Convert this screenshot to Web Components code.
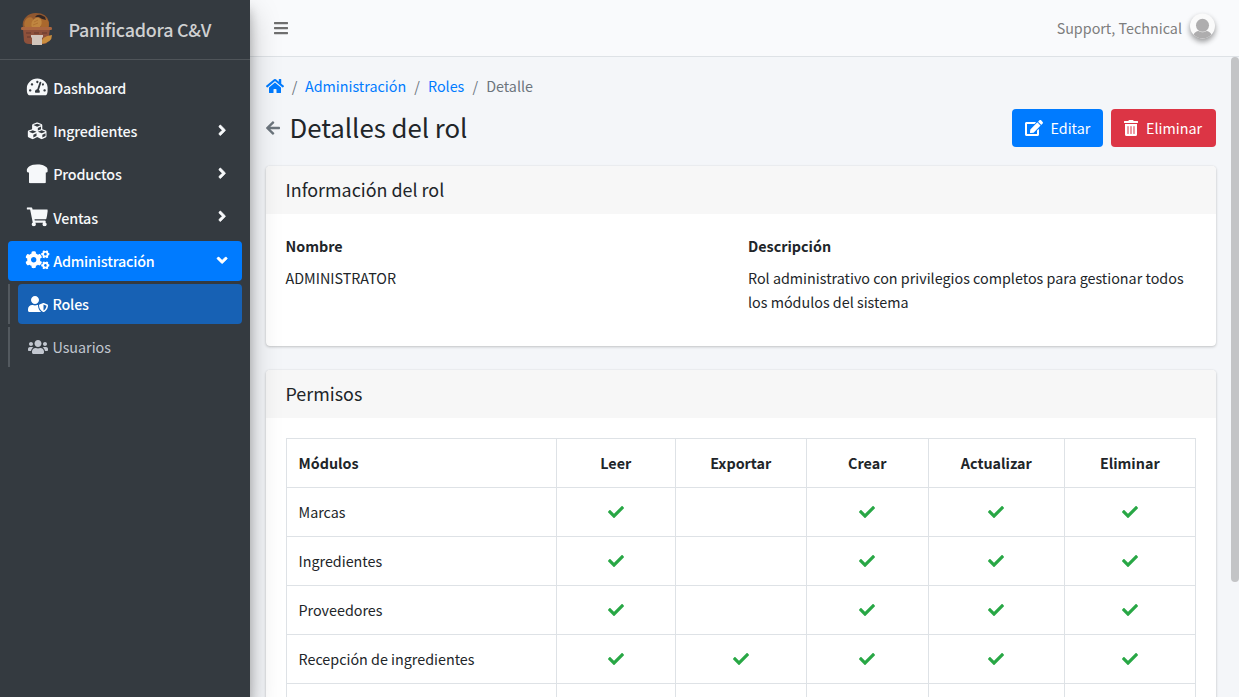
<!DOCTYPE html>
<html lang="es">
<head>
<meta charset="utf-8">
<title>Panificadora C&amp;V - Detalles del rol</title>
<style>
html,body{margin:0;height:100%;overflow:hidden}
body{font-family:"Noto Sans CJK SC","Noto Sans CJK JP",sans-serif;font-size:14.33px;line-height:24px;color:#212529;background:#f4f6f9}
</style>
</head>
<body>
<app-shell></app-shell>
<script>
const GEAR='M512.1 191l-8.2 14.3c-3 5.3-9.4 7.5-15.1 5.4-11.8-4.4-22.6-10.7-32.1-18.6-4.6-3.8-5.8-10.5-2.8-15.7l8.2-14.3c-6.9-8-12.3-17.3-15.9-27.4h-16.5c-6 0-11.2-4.3-12.2-10.3-2-12-2.1-24.6 0-37.1 1-6 6.2-10.4 12.2-10.4h16.5c3.6-10.1 9-19.4 15.9-27.4l-8.2-14.3c-3-5.2-1.9-11.9 2.8-15.7 9.5-7.9 20.4-14.2 32.1-18.6 5.7-2.1 12.1.1 15.1 5.4l8.2 14.3c10.5-1.9 21.2-1.9 31.7 0L552 6.3c3-5.3 9.4-7.5 15.1-5.4 11.8 4.4 22.6 10.7 32.1 18.6 4.6 3.8 5.8 10.5 2.8 15.7l-8.2 14.3c6.9 8 12.3 17.3 15.9 27.4h16.5c6 0 11.2 4.3 12.2 10.3 2 12 2.1 24.6 0 37.1-1 6-6.2 10.4-12.2 10.4h-16.5c-3.6 10.1-9 19.4-15.9 27.4l8.2 14.3c3 5.2 1.9 11.9-2.8 15.7-9.5 7.9-20.4 14.2-32.1 18.6-5.7 2.1-12.1-.1-15.1-5.4l-8.2-14.3c-10.4 1.9-21.2 1.9-31.7 0zm-10.5-58.8c38.5 29.6 82.4-14.3 52.8-52.8-38.5-29.7-82.4 14.3-52.8 52.8z';
const ICONS={
check:[512,'M173.898 439.404l-166.4-166.4c-9.997-9.997-9.997-26.206 0-36.204l36.203-36.204c9.997-9.998 26.207-9.998 36.204 0L192 312.69 432.095 72.596c9.997-9.997 26.207-9.997 36.204 0l36.203 36.204c9.997 9.997 9.997 26.206 0 36.204l-294.4 294.401c-9.998 9.997-26.207 9.997-36.204-.001z'],
bars:[448,'M16 132h416c8.837 0 16-7.163 16-16V76c0-8.837-7.163-16-16-16H16C7.163 60 0 67.163 0 76v40c0 8.837 7.163 16 16 16zm0 160h416c8.837 0 16-7.163 16-16v-40c0-8.837-7.163-16-16-16H16c-8.837 0-16 7.163-16 16v40c0 8.837 7.163 16 16 16zm0 160h416c8.837 0 16-7.163 16-16v-40c0-8.837-7.163-16-16-16H16c-8.837 0-16 7.163-16 16v40c0 8.837 7.163 16 16 16z'],
home:[576,'M280.37 148.26L96 300.11V464a16 16 0 0 0 16 16l112.06-.29a16 16 0 0 0 15.92-16V368a16 16 0 0 1 16-16h64a16 16 0 0 1 16 16v95.64a16 16 0 0 0 16 16.05L464 480a16 16 0 0 0 16-16V300L295.67 148.26a12.19 12.19 0 0 0-15.3 0zM571.6 251.47L488 182.56V44.05a12 12 0 0 0-12-12h-56a12 12 0 0 0-12 12v72.61L318.47 43a48 48 0 0 0-61 0L4.34 251.47a12 12 0 0 0-1.6 16.9l25.5 31A12 12 0 0 0 45.15 301l235.22-193.74a12.19 12.19 0 0 1 15.3 0L530.9 301a12 12 0 0 0 16.9-1.6l25.5-31a12 12 0 0 0-1.7-16.93z'],
cart:[576,'M528.12 301.319l47.273-208C578.806 78.301 567.391 64 551.99 64H159.208l-9.166-44.81C147.758 8.021 137.93 0 126.529 0H24C10.745 0 0 10.745 0 24v16c0 13.255 10.745 24 24 24h69.883l70.248 343.435C147.325 417.1 136 435.222 136 456c0 30.928 25.072 56 56 56s56-25.072 56-56c0-15.674-6.447-29.835-16.824-40h209.647C430.447 426.165 424 440.326 424 456c0 30.928 25.072 56 56 56s56-25.072 56-56c0-22.172-12.888-41.332-31.579-50.405l5.517-24.276c3.413-15.018-8.002-29.319-23.403-29.319H218.117l-6.545-32h293.145c11.206 0 20.92-7.754 23.403-18.681z'],
edit:[576,'M402.6 83.2l90.2 90.2c3.8 3.8 3.8 10 0 13.8L274.4 405.6l-92.8 10.3c-12.4 1.4-22.9-9.1-21.5-21.5l10.3-92.8L388.8 83.2c3.8-3.8 10-3.8 13.8 0zm162-22.9l-48.8-48.8c-15.2-15.2-39.9-15.2-55.2 0l-35.4 35.4c-3.8 3.8-3.8 10 0 13.8l90.2 90.2c3.8 3.8 10 3.8 13.8 0l35.4-35.4c15.2-15.3 15.2-40 0-55.2zM384 346.2V448H64V128h229.8c3.2 0 6.2-1.3 8.5-3.5l40-40c7.6-7.6 2.2-20.5-8.5-20.5H48C21.5 64 0 85.5 0 112v352c0 26.5 21.5 48 48 48h352c26.5 0 48-21.5 48-48V306.2c0-10.7-12.9-16-20.5-8.5l-40 40c-2.2 2.3-3.5 5.3-3.5 8.5z'],
trash:[448,'M32 464a48 48 0 0 0 48 48h288a48 48 0 0 0 48-48V128H32zm272-256a16 16 0 0 1 32 0v224a16 16 0 0 1-32 0zm-96 0a16 16 0 0 1 32 0v224a16 16 0 0 1-32 0zm-96 0a16 16 0 0 1 32 0v224a16 16 0 0 1-32 0zM432 32H312l-9.4-18.7A24 24 0 0 0 281.1 0H166.8a23.72 23.72 0 0 0-21.4 13.3L136 32H16A16 16 0 0 0 0 48v32a16 16 0 0 0 16 16h416a16 16 0 0 0 16-16V48a16 16 0 0 0-16-16z'],
angle:[256,'M31.7 239l136-136c9.4-9.4 24.6-9.4 33.9 0l22.6 22.6c9.4 9.4 9.4 24.6 0 33.9L127.9 256l96.4 96.4c9.4 9.4 9.4 24.6 0 33.9L201.7 409c-9.4 9.4-24.6 9.4-33.9 0l-136-136c-9.5-9.4-9.5-24.6-.1-34z'],
back:[448,'M257.5 445.1l-22.2 22.2c-9.4 9.4-24.6 9.4-33.9 0L7 273c-9.4-9.4-9.4-24.6 0-33.9L201.4 44.7c9.4-9.4 24.6-9.4 33.9 0l22.2 22.2c9.5 9.5 9.3 25-.4 34.3L136.6 216H424c13.3 0 24 10.7 24 24v32c0 13.3-10.7 24-24 24H136.6l120.5 114.8c9.8 9.3 10 24.8.4 34.3z'],
users:[640,'M96 224c35.3 0 64-28.7 64-64s-28.7-64-64-64-64 28.7-64 64 28.7 64 64 64zm448 0c35.3 0 64-28.7 64-64s-28.7-64-64-64-64 28.7-64 64 28.7 64 64 64zm32 32h-64c-17.6 0-33.5 7.1-45.1 18.6 40.3 22.1 68.9 62 75.1 109.4h66c17.7 0 32-14.3 32-32v-32c0-35.3-28.7-64-64-64zm-256 0c61.9 0 112-50.1 112-112S381.9 32 320 32 208 82.1 208 144s50.1 112 112 112zm76.8 32h-8.3c-20.8 10-43.9 16-68.5 16s-47.6-6-68.5-16h-8.3C179.6 288 128 339.6 128 403.2V432c0 26.5 21.5 48 48 48h288c26.5 0 48-21.5 48-48v-28.8c0-63.6-51.6-115.2-115.2-115.2zm-223.7-13.4C161.5 263.1 145.6 256 128 256H64c-35.3 0-64 28.7-64 64v32c0 17.7 14.3 32 32 32h65.9c6.3-47.4 34.9-87.3 75.2-109.4z'],
shield:[640,'M622.3 271.1l-115.2-45c-4.1-1.6-12.6-3.7-22.2 0l-115.2 45c-10.7 4.2-17.7 14-17.7 24.9 0 111.6 68.7 188.8 132.9 213.9 9.6 3.7 18 1.6 22.2 0C558.4 489.9 640 420.5 640 296c0-10.9-7-20.7-17.7-24.9zM496 462.4V273.3l95.5 37.3c-5.6 87.1-60.9 135.4-95.5 151.8zM224 256c70.7 0 128-57.3 128-128S294.7 0 224 0 96 57.3 96 128s57.3 128 128 128zm96 40c0-2.5.8-4.8 1.1-7.2-2.5-.1-4.9-.8-7.5-.8h-16.7c-22.2 10.2-46.9 16-72.9 16s-50.6-5.8-72.9-16h-16.7C60.2 288 0 348.2 0 422.4V464c0 26.5 21.5 48 48 48h352c6.8 0 13.3-1.5 19.2-4-54-42.9-99.2-116.7-99.2-212z'],
bread:[576,'M288 0C108 0 0 93.4 0 169.14 0 199.44 24.24 224 64 224v256c0 17.67 16.12 32 36 32h376c19.88 0 36-14.33 36-32V224c39.76 0 64-24.56 64-54.86C576 93.4 468 0 288 0z'],
gauge:[576,'M288 32C128.94 32 0 160.94 0 320c0 52.8 14.25 102.26 39.06 144.8 5.61 9.62 16.3 15.2 27.44 15.2h443c11.14 0 21.83-5.58 27.44-15.2C561.75 422.26 576 372.8 576 320c0-159.06-128.94-288-288-288zm0 64c14.71 0 26.58 10.13 30.32 23.65-1.11 2.26-2.64 4.23-3.45 6.67l-9.22 27.67c-5.13 3.49-10.97 6.01-17.64 6.01-17.67 0-32-14.33-32-32S270.33 96 288 96zM96 384c-17.67 0-32-14.33-32-32s14.33-32 32-32 32 14.33 32 32-14.33 32-32 32zm48-160c-17.67 0-32-14.33-32-32s14.33-32 32-32 32 14.33 32 32-14.33 32-32 32zm246.77-72.41l-61.33 184C343.13 347.33 352 364.54 352 384c0 11.72-3.38 22.55-8.88 32H232.88c-5.5-9.45-8.88-20.28-8.88-32 0-33.94 26.5-61.43 59.9-63.59l61.34-184.01c4.17-12.56 17.73-19.45 30.36-15.17 12.57 4.19 19.35 17.79 15.17 30.36zm14.66 57.2l15.52-46.55c3.47-1.29 7.13-2.23 11.05-2.23 17.67 0 32 14.33 32 32s-14.33 32-32 32c-11.38-.01-20.89-6.28-26.57-15.22zM480 384c-17.67 0-32-14.33-32-32s14.33-32 32-32 32 14.33 32 32-14.33 32-32 32z'],
cubes:[512,'M488.6 250.2L392 214V105.5c0-15-9.3-28.4-23.4-33.7l-100-37.5c-8.1-3.1-17.1-3.1-25.3 0l-100 37.5c-14.1 5.3-23.4 18.7-23.4 33.7V214l-96.6 36.2C9.3 255.5 0 268.9 0 283.9V394c0 13.6 7.7 26.1 19.9 32.2l100 50c10.1 5.1 22.1 5.1 32.2 0l103.9-52 103.9 52c10.1 5.1 22.1 5.1 32.2 0l100-50c12.2-6.1 19.9-18.6 19.9-32.2V283.9c0-15-9.3-28.4-23.4-33.7zM358 214.8l-85 31.9v-68.2l85-37v73.3zM154 104.1l102-38.2 102 38.2v.6l-102 41.4-102-41.4v-.6zm84 291.1l-85 42.5v-79.1l85-38.8v75.4zm0-112l-102 41.4-102-41.4v-.6l102-38.2 102 38.2v.6zm240 112l-85 42.5v-79.1l85-38.8v75.4zm0-112l-102 41.4-102-41.4v-.6l102-38.2 102 38.2v.6z'],
cogs:[640,'M386.3 286.1l33.7 16.8c10.1 5.8 14.5 18.1 10.5 29.1-8.9 24.2-26.4 46.4-42.6 65.8-7.4 8.9-20.2 11.1-30.3 5.3l-29.1-16.8c-16 13.7-34.6 24.6-54.9 31.7v33.6c0 11.6-8.3 21.6-19.7 23.6-24.6 4.2-50.4 4.4-75.9 0-11.5-2-20-11.9-20-23.6V418c-20.3-7.2-38.9-18-54.9-31.7L74 403c-10 5.8-22.9 3.6-30.3-5.3-16.2-19.4-33.3-41.6-42.2-65.7-4-10.9.4-23.2 10.5-29.1l33.3-16.8c-3.9-20.9-3.9-42.4 0-63.4L12 205.8c-10.1-5.8-14.6-18.1-10.5-29 8.9-24.2 26-46.4 42.2-65.8 7.4-8.9 20.2-11.1 30.3-5.3l29.1 16.8c16-13.7 34.6-24.6 54.9-31.7V57.1c0-11.5 8.2-21.5 19.6-23.5 24.6-4.2 50.5-4.4 76-.1 11.5 2 20 11.9 20 23.6v33.6c20.3 7.2 38.9 18 54.9 31.7l29.1-16.8c10-5.8 22.9-3.6 30.3 5.3 16.2 19.4 33.2 41.6 42.1 65.8 4 10.9.1 23.2-10 29.1l-33.7 16.8c3.9 21 3.9 42.5 0 63.5zm-117.6 21.1c59.2-77-28.7-164.9-105.7-105.7-59.2 77 28.7 164.9 105.7 105.7z']
};
function define(name,html,after){
  const t=document.createElement('template');t.innerHTML=html;
  customElements.define(name,class extends HTMLElement{
    connectedCallback(){
      if(this.shadowRoot)return;
      this.attachShadow({mode:'open'}).append(t.content.cloneNode(true));
      if(after)after(this,this.shadowRoot);
    }
  });
}

define('fa-icon','<style>:host{display:inline-flex;flex:none;font-size:16px;line-height:0}svg{height:1em;fill:currentColor;display:block}</style><svg></svg>',(el,r)=>{
  const n=el.getAttribute('name'),[w,d]=ICONS[n],s=r.querySelector('svg');
  s.setAttribute('viewBox','0 0 '+w+' 512');s.style.width=w/512+'em';
  s.innerHTML='<path d="'+d+'"/>'+(n==='cogs'?'<path d="'+GEAR+'"/><path transform="translate(0 299)" d="'+GEAR+'"/>':'');
});

define('brand-logo',`<style>:host{display:block;width:33px;height:33px;opacity:.8;transform:translateY(-1px)}svg{display:block}</style>
<svg width="33" height="33" viewBox="0 0 33 33">
<path d="M3 16C1 7 8 1 16 1q11 0 13 9v6z" fill="#a85f2c"/>
<ellipse cx="9" cy="11" rx="4.500" ry="6" transform="rotate(25 9 11)" fill="#cf7f30"/>
<ellipse cx="24" cy="11" rx="4.500" ry="6" transform="rotate(-25 24 11)" fill="#c87429"/>
<path d="M15 5q2-3 6-2l4 2 1 3-4-1-3-2z" fill="#33231f"/>
<ellipse cx="16.500" cy="11.500" rx="4.800" ry="6.200" transform="rotate(30 16.500 11.500)" fill="#e39a40"/>
<path d="M14 10l4-2M13 13l5-2" stroke="#c9782c" stroke-width=".8"/>
<path d="M3 17h27l-2 12q-1 3-4 3H9q-4 0-5-3z" fill="#a5573a"/>
<path d="M2 15h29q1 0 1 1.500t-1 1.500H2q-1 0-1-1.500T2 15z" fill="#c9723f"/>
<path d="M6 21h5m3 0h5m3 0h5M7 25h4" stroke="#70382a" stroke-width="1"/>
<path d="M21 32q0-8 11-9 0 8-11 9z" fill="#f0a23e"/>
<path d="M11 23h12v2l-1 1v7h-10v-7l-1-1z" fill="#fbe9dc"/></svg>`);

define('nav-item',`<style>
:host{display:flex;margin-bottom:3.2px;color:#f6f8fa}
:host([sub]){border-left:2px solid #53595f;padding-left:8px;height:40px}
.l{flex:1;display:flex;align-items:center;height:40px;box-sizing:border-box;padding:0 15.4px 0 16.8px;border-radius:4px}
:host([sub]) .l{padding-left:7.2px}
:host([open]) .l{background:#007bff;color:#fff}
:host([active]) .l{background:#1761b4;color:#fff}
:host([muted]){color:#c2c7d0}
.i{width:25.6px;display:flex;justify-content:center;margin-right:2.8px;transform:translate(-.4px,-.8px)}
.i fa-icon{font-size:19.2px}
:host([sub]) .i fa-icon{font-size:16px}
:host([sub]) .i{margin-right:1.6px;transform:none}
.t{flex:1;font-weight:500;letter-spacing:-.18px}
:host([muted]) .t{font-weight:400;letter-spacing:0}
.a{font-size:16.5px;transform:translateY(-1px) rotate(180deg);stroke:currentColor;stroke-width:18}
:host([open]) .a{transform:translateY(-1px) rotate(-90deg)}
</style><div class="l"><span class="i"></span><span class="t"><slot></slot></span></div>`,(el,r)=>{
  r.querySelector('.i').innerHTML='<fa-icon name="'+el.getAttribute('icon')+'"></fa-icon>';
  if(el.hasAttribute('more')||el.hasAttribute('open'))r.querySelector('.l').insertAdjacentHTML('beforeend','<fa-icon class="a" name="angle"></fa-icon>');
});

define('side-bar',`<style>
:host{display:flex;flex-direction:column;width:250px;height:100%;background:#343a40;box-shadow:0 14px 28px rgba(0,0,0,.25),0 10px 10px rgba(0,0,0,.22);position:relative;z-index:2}
.b{height:59px;border-bottom:1px solid #4f5459;display:flex;align-items:center;padding-left:20px;gap:15.500px;color:#cfd0d1;font-size:17.9px;box-sizing:content-box}
.b span{transform:translateY(-1px);font-weight:500;letter-spacing:-.23px}
nav{padding:8px 8px 0}
</style>
<div class="b"><brand-logo></brand-logo><span>Panificadora C&amp;V</span></div>
<nav>
<nav-item icon="gauge">Dashboard</nav-item>
<nav-item icon="cubes" more>Ingredientes</nav-item>
<nav-item icon="bread" more>Productos</nav-item>
<nav-item icon="cart" more>Ventas</nav-item>
<nav-item icon="cogs" open>Administración</nav-item>
<nav-item icon="shield" sub active>Roles</nav-item>
<nav-item icon="users" sub muted>Usuarios</nav-item>
</nav>`);

define('user-avatar',`<style>:host{display:block;width:25px;height:25px;border-radius:50%;background:#fafafa;overflow:hidden;box-shadow:0 3px 6px rgba(0,0,0,.2),0 3px 5px rgba(0,0,0,.23)}svg{display:block}</style>
<svg width="25" height="25" viewBox="0 0 25 25" fill="#aeadae"><circle cx="12.5" cy="11.800" r="6.500"/><path d="M3.500 21q2-3.500 5-3.500 4 2.500 8 0 3 0 5 3.500l-4 4h-10z"/></svg>`);

define('top-bar',`<style>
:host{display:flex;align-items:center;height:56px;border-bottom:1px solid #dee2e6;background:#f9fafc;padding:0 24px;color:#7d7d7d}
fa-icon{color:#6f6f6f}
.u{margin-left:auto;display:flex;align-items:center;gap:8px}
user-avatar{transform:translateY(-2.500px)}
</style><fa-icon name="bars"></fa-icon><div class="u"><span>Support, Technical</span><user-avatar></user-avatar></div>`);

define('bread-crumb',`<style>
:host{display:flex;align-items:center;height:24px;color:#6c757d}
a{color:#007bff}i{font-style:normal;width:21.800px;text-align:center}
fa-icon{display:flex}
i:nth-of-type(1){width:21px}
</style><a><fa-icon name="home"></fa-icon></a><i>/</i><a>Administración</a><i>/</i><a>Roles</a><i>/</i><span>Detalle</span>`);

define('action-button',`<style>
:host{display:flex;align-items:center;height:38px;width:91px;box-sizing:border-box;padding-left:12.500px;border-radius:4px;background:#007bff;color:#fff;gap:8px}
:host([danger]){background:#dc3545;width:105px;padding-left:13px}
</style><span class="i"></span><span><slot></slot></span>`,(el,r)=>{
  const s=r.querySelector('.i');s.style.display='flex';
  s.innerHTML='<fa-icon name="'+el.getAttribute('icon')+'"></fa-icon>';
});

define('content-card',`<style>
:host{display:block;background:#fff;border-radius:4px;box-shadow:0 0 1px rgba(0,0,0,.125),0 1px 3px rgba(0,0,0,.2)}
header{height:48px;display:flex;align-items:center;padding:0 19.500px 2px;box-sizing:border-box;background:#f7f7f7;border-radius:4px 4px 0 0;font-size:17.9px}
section{padding:20px}
</style><header><slot name="title"></slot></header><section><slot></slot></section>`);

define('field-pair',`<style>:host{display:block;margin-left:-.5px}b{display:block;margin-bottom:8px}p{margin:0}</style><b><slot name="label"></slot></b><p><slot></slot></p>`);

define('perm-table',`<style>
:host{display:block}
table{border-collapse:collapse;table-layout:fixed;width:910px}
td,th{border:1px solid #dee2e6;height:48px;padding:0 12.500px 0 12px;text-align:center;line-height:24px}
td:first-child,th:first-child{text-align:left;padding-left:11.500px}
fa-icon{color:#28a745;display:flex;justify-content:center}
</style><table><colgroup><col style="width:270px"><col style="width:119px"><col style="width:131px"><col style="width:122px"><col style="width:136px"><col style="width:131px"></colgroup>
<thead><tr><th>Módulos</th><th>Leer</th><th>Exportar</th><th>Crear</th><th>Actualizar</th><th>Eliminar</th></tr></thead><tbody></tbody></table>`,(el,r)=>{
  const rows=[['Marcas','10111'],['Ingredientes','10111'],['Proveedores','10111'],['Recepción de ingredientes','11111'],['','00000']];
  r.querySelector('tbody').innerHTML=rows.map(([n,p])=>'<tr><td>'+n+'</td>'+[...p].map(c=>'<td>'+(c==='1'?'<fa-icon name="check"></fa-icon>':'')+'</td>').join('')+'</tr>').join('');
});

define('role-page',`<style>
:host{display:block;height:640px;overflow:hidden;padding:17px 23px 0 16px;box-sizing:border-box}
.h{display:flex;align-items:center;height:38px;margin:11px 0 19px;gap:8px}
h1{font-size:25.75px;font-weight:400;margin:0 auto 2px 1.500px;line-height:34px}
.h>fa-icon{color:#6c757d}
.two{display:grid;grid-template-columns:1fr 1fr;gap:15px;height:92px}
content-card+content-card{margin-top:24px}
</style>
<bread-crumb></bread-crumb>
<div class="h"><fa-icon name="back"></fa-icon><h1>Detalles del rol</h1><action-button icon="edit">Editar</action-button><action-button danger icon="trash">Eliminar</action-button></div>
<content-card><span slot="title">Información del rol</span><div class="two"><field-pair><span slot="label">Nombre</span>ADMINISTRATOR</field-pair><field-pair><span slot="label">Descripción</span>Rol administrativo con privilegios completos para gestionar todos los módulos del sistema</field-pair></div></content-card>
<content-card><span slot="title">Permisos</span><perm-table></perm-table></content-card>`);

define('scroll-thumb',`<style>:host{display:block;position:absolute;right:0;top:57px;width:8px;height:525px;border-radius:4px;background:#c3c4c6}</style>`);

define('app-shell',`<style>:host{display:flex;height:697px;width:1239px;position:relative;overflow:hidden}main{flex:1;min-width:0}</style>
<side-bar></side-bar><main><top-bar></top-bar><role-page></role-page></main><scroll-thumb></scroll-thumb>`);
</script>
</body>
</html>
